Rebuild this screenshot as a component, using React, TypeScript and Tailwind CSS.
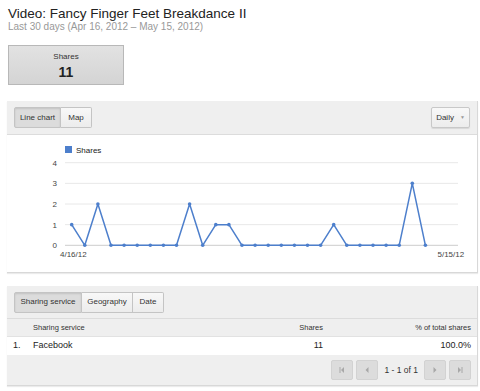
import React from "react";

const data = [1,0,2,0,0,0,0,0,0,2,0,1,1,0,0,0,0,0,0,0,1,0,0,0,0,0,3,0];

function Chart() {
  const ox = 7, oy = 135;
  const x0 = 71.7 - ox, dx = 13.1;
  const yZero = 245.3 - oy, dy = 20.65;
  const pts = data.map((v, i) => [x0 + i * dx, yZero - v * dy]);
  const gx1 = 65 - ox, gx2 = 458 - ox;
  return (
    <svg width="470" height="137" className="block" style={{ fontFamily: '"Liberation Sans", Arial, sans-serif' }}>
      <rect x={65 - ox} y={146 - oy} width="7" height="7" fill="#4d7fcc" />
      <text x={76 - ox} y={153 - oy} fontSize="8" fill="#222">Shares</text>
      {[0, 1, 2, 3, 4].map((v) => (
        <g key={v}>
          <line x1={gx1} x2={gx2} y1={yZero - v * dy} y2={yZero - v * dy} stroke={v === 0 ? "#ccc" : "#e8e8e8"} strokeWidth="1" />
          <text x={57 - ox} y={yZero - v * dy + 3} fontSize="8" fill="#444" textAnchor="end">{v}</text>
        </g>
      ))}
      <polyline points={pts.map((p) => p.join(",")).join(" ")} fill="none" stroke="#4d7fcc" strokeWidth="1.5" strokeLinejoin="round" />
      {pts.map((p, i) => (
        <circle key={i} cx={p[0]} cy={p[1]} r="1.8" fill="#4d7fcc" />
      ))}
      <text x={60 - ox} y={257 - oy} fontSize="8" fill="#444">4/16/12</text>
      <text x={437.5 - ox} y={257 - oy} fontSize="8" fill="#444">5/15/12</text>
    </svg>
  );
}

function PagerBtn({ kind }: { kind: "first" | "prev" | "next" | "last" }) {
  return (
    <div className="w-[22px] h-[20px] bg-[#dcdcdc] border border-[#d2d2d2] rounded-[2px] flex items-center justify-center">
      <svg width="8" height="8" viewBox="0 0 8 8">
        {kind === "first" && (<><rect x="1.5" y="1" width="1" height="6" fill="#a8a8a8" /><path d="M6 1 L3 4 L6 7 Z" fill="#a8a8a8" /></>)}
        {kind === "prev" && <path d="M5.5 1 L2.5 4 L5.5 7 Z" fill="#a8a8a8" />}
        {kind === "next" && <path d="M2.5 1 L5.5 4 L2.5 7 Z" fill="#a8a8a8" />}
        {kind === "last" && (<><path d="M2 1 L5 4 L2 7 Z" fill="#a8a8a8" /><rect x="5.5" y="1" width="1" height="6" fill="#a8a8a8" /></>)}
      </svg>
    </div>
  );
}

export default function App() {
  return (
    <div className="w-[480px] h-[391px] bg-white overflow-hidden text-[#333]" style={{ fontFamily: '"Liberation Sans", Arial, sans-serif' }}>
      <div className="pl-[8px] pt-[6px]">
        <div className="text-[13.5px] leading-[15px] text-[#222]">Video: Fancy Finger Feet Breakdance II</div>
        <div className="text-[10px] leading-[12px] text-[#999]">Last 30 days (Apr 16, 2012 – May 15, 2012)</div>
      </div>
      <div className="ml-[8px] mt-[12px] w-[116px] h-[40px] border border-[#b8b8b8] bg-gradient-to-b from-[#e2e2e2] to-[#d4d4d4] flex flex-col items-center pt-[6px]">
        <div className="text-[8px] leading-[10px] text-[#333]">Shares</div>
        <div className="text-[14px] leading-[16px] font-bold text-[#222] mt-[2px]">11</div>
      </div>

      <div className="ml-[7px] mt-[16px] w-[471px] border-r border-b border-[#d8d8d8] shadow-[0_1px_1px_rgba(0,0,0,0.08)]">
        <div className="h-[34px] bg-[#efefef] border-b border-[#dcdcdc] flex items-center justify-between pl-[7px] pr-[7px]">
          <div className="flex h-[21px] text-[8px]">
            <div className="w-[47px] flex items-center justify-center bg-[#dcdcdc] border border-[#c4c4c4] rounded-l-[2px] shadow-[inset_0_1px_2px_rgba(0,0,0,0.12)]">Line chart</div>
            <div className="w-[31px] flex items-center justify-center bg-gradient-to-b from-[#f8f8f8] to-[#ececec] border border-l-0 border-[#c4c4c4] rounded-r-[2px]">Map</div>
          </div>
          <div className="w-[39px] h-[21px] flex items-center justify-center gap-[6px] text-[8px] bg-gradient-to-b from-[#f8f8f8] to-[#ececec] border border-[#c8c8c8] rounded-[2px] shadow-[0_1px_1px_rgba(0,0,0,0.1)]">
            <span>Daily</span>
            <span className="text-[5px] text-[#999]">▼</span>
          </div>
        </div>
        <div className="bg-white">
          <Chart />
        </div>
      </div>

      <div className="ml-[7px] mt-[13px] w-[471px] border-r border-b border-[#d8d8d8] shadow-[0_1px_1px_rgba(0,0,0,0.08)]">
        <div className="h-[33px] bg-[#efefef] border-b border-[#dcdcdc] flex items-center pl-[7px]">
          <div className="flex h-[21px] text-[8px]">
            <div className="w-[68px] flex items-center justify-center bg-[#dcdcdc] border border-[#c4c4c4] rounded-l-[2px] shadow-[inset_0_1px_2px_rgba(0,0,0,0.12)]">Sharing service</div>
            <div className="w-[51px] flex items-center justify-center bg-gradient-to-b from-[#f8f8f8] to-[#ececec] border border-l-0 border-[#c4c4c4]">Geography</div>
            <div className="w-[31px] flex items-center justify-center bg-gradient-to-b from-[#f8f8f8] to-[#ececec] border border-l-0 border-[#c4c4c4] rounded-r-[2px]">Date</div>
          </div>
        </div>
        <div className="h-[18px] bg-[#efefef] border-b border-[#e2e2e2] flex items-center text-[7.5px] text-[#333]">
          <div className="pl-[26px] flex-1">Sharing service</div>
          <div className="w-[60px] text-right">Shares</div>
          <div className="w-[154px] text-right pr-[6px]">% of total shares</div>
        </div>
        <div className="h-[18px] bg-white flex items-center text-[9px] text-[#222]">
          <div className="w-[26px] pl-[6px]">1.</div>
          <div className="flex-1">Facebook</div>
          <div className="w-[60px] text-right">11</div>
          <div className="w-[154px] text-right pr-[6px]">100.0%</div>
        </div>
        <div className="h-[30px] bg-[#efefef] flex items-center justify-end pr-[6px] gap-[3px]">
          <PagerBtn kind="first" />
          <PagerBtn kind="prev" />
          <div className="text-[8.5px] text-[#333] px-[3px]">1 - 1 of 1</div>
          <PagerBtn kind="next" />
          <PagerBtn kind="last" />
        </div>
      </div>
    </div>
  );
}
